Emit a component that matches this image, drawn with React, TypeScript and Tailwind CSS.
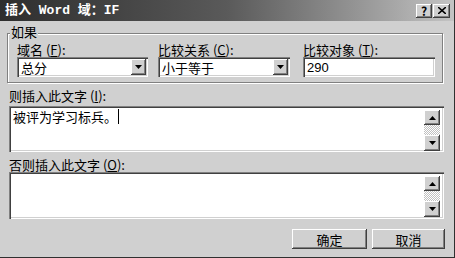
import React from "react";

const raised =
  "bg-[#d0d0d0] shadow-[inset_-1px_-1px_#404040,inset_1px_1px_#ffffff,inset_-2px_-2px_#808080]";
const sunken =
  "bg-white shadow-[inset_1px_1px_#808080,inset_2px_2px_#404040,inset_-1px_-1px_#ffffff,inset_-2px_-2px_#d0d0d0]";

function Arrow({ up = false }: { up?: boolean }) {
  return (
    <svg width="7" height="4" viewBox="0 0 7 4">
      {up ? <polygon points="3.5,0 7,4 0,4" fill="#000" /> : <polygon points="0,0 7,0 3.5,4" fill="#000" />}
    </svg>
  );
}

function Combo({ value, width }: { value: string; width: string }) {
  return (
    <div className={`${sunken} ${width} h-[20px] flex items-center pl-[4px] pr-[2px]`}>
      <span className="flex-1 text-[13px] leading-none text-black">{value}</span>
      <div className={`${raised} w-[15px] h-[16px] flex items-center justify-center`}>
        <Arrow />
      </div>
    </div>
  );
}

function ScrollBar() {
  return (
    <div className="flex flex-col w-[16px] h-[41px] mt-[4px] mr-[4px]">
      <div className={`${raised} h-[15px] flex items-center justify-center`}>
        <Arrow up />
      </div>
      <div className="flex-1 bg-[repeating-conic-gradient(#ffffff_0_25%,#c0c0c0_0_50%)] bg-[length:2px_2px]" />
      <div className={`${raised} h-[16px] flex items-center justify-center`}>
        <Arrow />
      </div>
    </div>
  );
}

export default function App() {
  return (
    <div
      className="w-[455px] h-[258px] bg-[#d0d0d0] border-r border-b border-r-[#303030] border-b-[#303030] flex flex-col text-black"
      style={{ fontFamily: '"Noto Sans CJK SC", "Liberation Sans", sans-serif' }}
    >
      {/* Title bar */}
      <div className="h-[21px] flex items-center bg-gradient-to-r from-[#2e2e2e] via-[#5a5a5a] to-[#c4c4c4] pl-[5px] pr-[4px]">
        <span
          className="flex-1 text-white text-[13px] font-bold leading-none"
          style={{ fontFamily: '"Liberation Mono", "Noto Sans CJK SC", monospace' }}
        >
          插入 Word 域：IF
        </span>
        <div className={`${raised} w-[16px] h-[14px] flex items-center justify-center text-[12px] font-bold leading-none`}>?</div>
        <div className={`${raised} w-[17px] h-[14px] ml-[1px] flex items-center justify-center`}>
          <svg width="8" height="7" viewBox="0 0 8 7">
            <path d="M0 0 L8 7 M8 0 L0 7" stroke="#000" strokeWidth="1.6" />
          </svg>
        </div>
      </div>

      {/* Group box */}
      <div className="relative ml-[7px] mt-[12px] w-[436px] h-[50px] border border-[#808080] shadow-[1px_1px_#ffffff,inset_1px_1px_#ffffff]">
        <span className="absolute -top-[9px] left-[2px] px-[1px] bg-[#d0d0d0] text-[13px] leading-[14px]">如果</span>
        <div className="flex pl-[9px] pt-[9px]">
          <div className="flex flex-col w-[131px]">
            <span className="text-[13px] leading-[14px] h-[14px]">
              域名 (<u>F</u>):
            </span>
            <Combo value="总分" width="w-[131px]" />
          </div>
          <div className="flex flex-col w-[132px] ml-[10px]">
            <span className="text-[13px] leading-[14px] h-[14px]">
              比较关系 (<u>C</u>):
            </span>
            <Combo value="小于等于" width="w-[132px]" />
          </div>
          <div className="flex flex-col w-[132px] ml-[13px]">
            <span className="text-[13px] leading-[14px] h-[14px]">
              比较对象 (<u>T</u>):
            </span>
            <div className={`${sunken} h-[20px] flex items-center pl-[4px] text-[13px] leading-none`}>
              <span style={{ fontFamily: '"Liberation Sans", sans-serif' }}>290</span>
            </div>
          </div>
        </div>
      </div>

      {/* True text */}
      <div className="ml-[9px] mt-[6px] text-[13px] leading-[14px] h-[17px]">
        则插入此文字 (<u>I</u>):
      </div>
      <div className={`${sunken} ml-[9px] w-[435px] h-[46px] flex`}>
        <div className="flex-1 pl-[4px] pt-[3px] text-[13px] leading-[16px] flex items-start">
          <span>被评为学习标兵。</span>
          <span className="w-[1px] h-[15px] bg-black ml-[1px]" />
        </div>
        <ScrollBar />
      </div>

      {/* False text */}
      <div className="ml-[9px] mt-[6px] text-[13px] leading-[14px] h-[14px]">
        否则插入此文字 (<u>O</u>):
      </div>
      <div className={`${sunken} ml-[9px] w-[435px] h-[47px] flex`}>
        <div className="flex-1" />
        <ScrollBar />
      </div>

      {/* Buttons */}
      <div className="flex justify-end mt-[10px] pr-[9px] gap-[5px]">
        <div className={`${raised} w-[75px] h-[20px] flex items-center justify-center text-[13px] leading-none`}>确定</div>
        <div className={`${raised} w-[73px] h-[20px] flex items-center justify-center text-[13px] leading-none`}>取消</div>
      </div>
    </div>
  );
}
